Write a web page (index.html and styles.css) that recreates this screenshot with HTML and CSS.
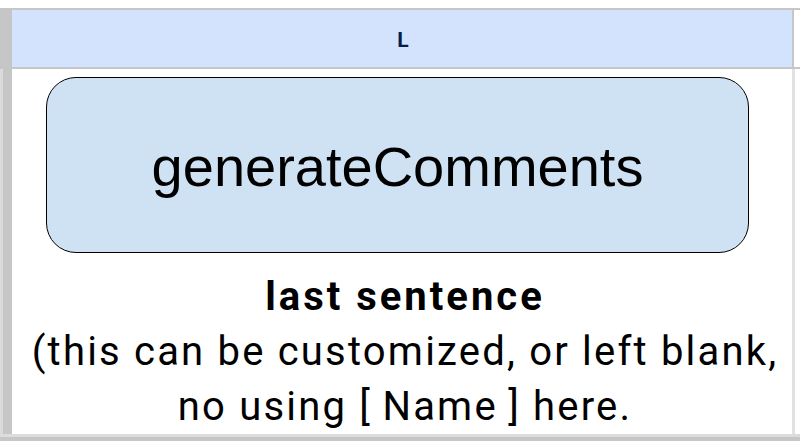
FILE: index.html
```html
<!DOCTYPE html>
<html>
<head>
<meta charset="utf-8">
<link rel="stylesheet" href="styles.css">
</head>
<body>
<div class="sheet">
  <div class="top-gap"></div>
  <div class="hline"></div>
  <div class="row header-row">
    <div class="row-head"></div>
    <div class="col-head">L</div>
    <div class="col-edge"></div>
    <div class="rest"></div>
  </div>
  <div class="hline"></div>
  <div class="row body-row">
    <div class="row-head body-head"></div>
    <div class="cell">
      <div class="button-shape">generateComments</div>
      <div class="caption">
        <strong>last sentence</strong><br>
        (this can be customized, or left blank,<br>
        no using [&thinsp;Name&thinsp;] here.
      </div>
    </div>
    <div class="cell-edge"></div>
    <div class="rest"></div>
  </div>
  <div class="bottom-light"></div>
  <div class="bottom-dark"></div>
</div>
</body>
</html>
```
FILE: styles.css
```css
html, body {
  margin: 0;
  padding: 0;
  background: #ffffff;
  overflow: hidden;
}
.sheet {
  width: 800px;
  height: 441px;
  display: flex;
  flex-direction: column;
}
.top-gap {
  height: 8px;
  flex-shrink: 0;
  background: #ffffff;
}
.hline {
  height: 2px;
  flex-shrink: 0;
  background: #c4c7c5;
}
.row {
  display: flex;
  flex-shrink: 0;
}
.header-row {
  height: 57px;
}
.row-head {
  width: 12px;
  background: #c6c6c6;
}
.col-head {
  width: 780px;
  background: #d3e3fd;
  display: flex;
  align-items: center;
  justify-content: center;
  font-family: Roboto, "Liberation Sans", sans-serif;
  font-weight: 700;
  font-size: 21px;
  color: #041e49;
  padding-left: 2px;
  padding-top: 2px;
  box-sizing: border-box;
}
.col-edge {
  width: 2px;
  background: #c4c7c5;
}
.rest {
  flex: 1;
  background: #ffffff;
}
.body-row {
  height: 365px;
}
.body-head {
  background: linear-gradient(to right, #dadada 0 3px, #c6c6c6 3px 12px);
}
.cell {
  width: 780px;
  background: #ffffff;
  display: flex;
  flex-direction: column;
  align-items: center;
  overflow: hidden;
}
.button-shape {
  flex-shrink: 0;
  align-self: flex-start;
  margin-top: 8px;
  margin-left: 34px;
  width: 703px;
  height: 176px;
  box-sizing: border-box;
  border: 1.5px solid #000000;
  border-radius: 30px;
  background: #cfe2f3;
  display: flex;
  align-items: center;
  justify-content: center;
  font-family: "Liberation Sans", Arial, sans-serif;
  font-size: 56px;
  color: #000000;
  padding-top: 2px;
}
.caption {
  flex-shrink: 0;
  margin-top: 16px;
  font-family: Roboto, "Liberation Sans", sans-serif;
  font-size: 40px;
  line-height: 55px;
  letter-spacing: 2.2px;
  text-align: center;
  color: #000000;
  white-space: nowrap;
  margin-left: 6px;
}
.caption strong {
  font-weight: 700;
  letter-spacing: 3px;
}
.cell-edge {
  width: 3px;
  background: #e1e1e1;
}
.bottom-light {
  height: 3px;
  flex-shrink: 0;
  background: #dcdcdc;
}
.bottom-dark {
  flex: 1;
  background: #c6c6c6;
}
```
